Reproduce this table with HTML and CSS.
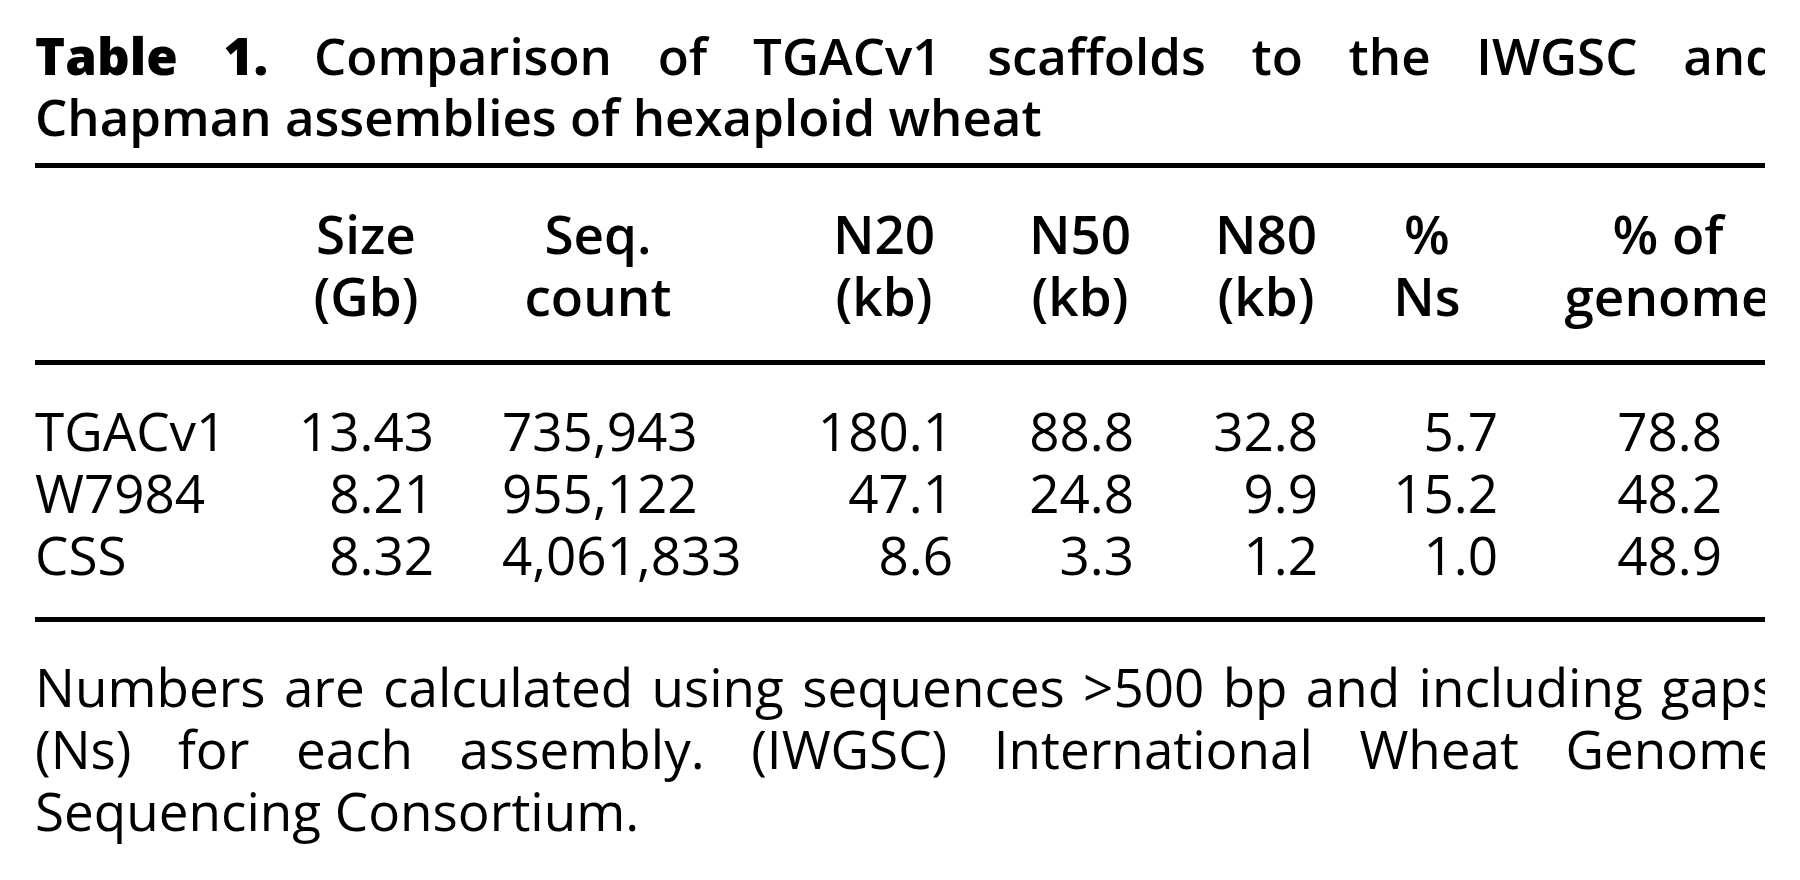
FILE: index.html
```html
<!DOCTYPE html>
<html lang="en">
<head>
<meta charset="utf-8">
<title>Table 1</title>
<link rel="stylesheet" href="styles.css">
</head>
<body>
<div class="clip">
  <div class="page">
    <h1 class="title"><span class="line-first"><span class="label">Table 1.</span> Comparison of TGACv1 scaffolds to the IWGSC and</span> Chapman assemblies of hexaploid wheat</h1>
    <div class="rule"></div>
    <div class="row head">
      <div></div>
      <div>Size<br>(Gb)</div>
      <div>Seq.<br>count</div>
      <div>N20<br>(kb)</div>
      <div>N50<br>(kb)</div>
      <div>N80<br>(kb)</div>
      <div>%<br>Ns</div>
      <div>% of<br>genome</div>
    </div>
    <div class="rule"></div>
    <div class="body">
      <div class="row data">
        <div>TGACv1</div><div>13.43</div><div>735,943</div><div>180.1</div><div>88.8</div><div>32.8</div><div>5.7</div><div>78.8</div>
      </div>
      <div class="row data">
        <div>W7984</div><div>8.21</div><div>955,122</div><div>47.1</div><div>24.8</div><div>9.9</div><div>15.2</div><div>48.2</div>
      </div>
      <div class="row data">
        <div>CSS</div><div>8.32</div><div>4,061,833</div><div>8.6</div><div>3.3</div><div>1.2</div><div>1.0</div><div>48.9</div>
      </div>
    </div>
    <div class="rule"></div>
    <p class="note">Numbers are calculated using sequences &gt;500 bp and including gaps (Ns) for each assembly. (IWGSC) International Wheat Genome Sequencing Consortium.</p>
  </div>
</div>
</body>
</html>
```

FILE: styles.css
```css
html, body {
  margin: 0;
  padding: 0;
  background: #fff;
}

body {
  font-family: "Open Sans", "Noto Sans", sans-serif;
  color: #000;
}

.clip {
  margin-left: 35px;
  width: 1730px;
  height: 880px;
  overflow: hidden;
}

.page {
  width: 1742px;
  padding-top: 25px;
}

.title {
  margin: 0;
  font-size: 51px;
  line-height: 61px;
  font-weight: 600;
  text-align: left;
}

.title .line-first {
  display: block;
  white-space: nowrap;
  text-align: justify;
  text-align-last: justify;
}

.title .label {
  font-weight: 800;
}

.rule {
  height: 5px;
  background: #000;
}

.title + .rule {
  margin-top: 16px;
}

.row {
  display: grid;
  grid-template-columns: 255px 162px 292px 256px 160px 190px 160px 267px;
  font-size: 53px;
  line-height: 62px;
}

.head {
  padding: 35px 0 33px;
  font-weight: 600;
  text-align: center;
}

.head > div:nth-child(2) { padding-right: 10px; }
.head > div:nth-child(4) { padding-left: 24px; }
.head > div:nth-child(6) { padding-left: 22px; }
.head > div:nth-child(7) { padding-right: 6px; }
.head > div:nth-child(8) { padding-left: 49px; }

.body {
  padding: 35px 0 31px;
}

.data > div { text-align: right; white-space: nowrap; }
.data > div:nth-child(1) { text-align: left; }
.data > div:nth-child(2) { padding-right: 18px; }
.data > div:nth-child(3) { text-align: left; padding-left: 50px; }
.data > div:nth-child(4) { padding-right: 47px; }
.data > div:nth-child(5) { padding-right: 26px; }
.data > div:nth-child(6) { padding-right: 32px; }
.data > div:nth-child(7) { padding-right: 12px; }
.data > div:nth-child(8) { padding-right: 55px; }

.note {
  margin: 34px 0 0;
  font-size: 53px;
  line-height: 62px;
  text-align: justify;
}
```
